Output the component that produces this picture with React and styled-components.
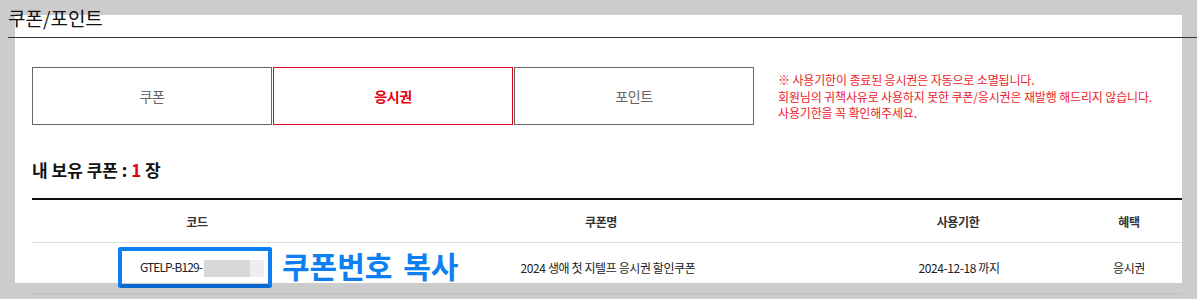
import React from "react";
import styled, { createGlobalStyle } from "styled-components";

const GlobalStyle = createGlobalStyle`
  * { box-sizing: border-box; }
  html, body { margin: 0; padding: 0; }
  body {
    font-family: "Noto Sans CJK KR", "Noto Sans", sans-serif;
    color: #222;
    background: #cccccc;
  }
`;

const Page = styled.div`
  position: relative;
  width: 1197px;
  height: 299px;
  overflow: hidden;
  background: #cccccc;
  padding: 15px 15px 0;
`;

const TitleBar = styled.h1`
  position: absolute;
  top: 5px;
  left: 8px;
  right: 0;
  margin: 0;
  padding-bottom: 6px;
  font-size: 19px;
  font-weight: 400;
  line-height: 26px;
  letter-spacing: 0;
  color: #111;
  border-bottom: 1px solid #333;
`;

const Panel = styled.div`
  height: 268px;
  background: #fff;
  overflow: hidden;
  padding: 52px 0 0 17px;
`;

const TopRow = styled.div`
  display: flex;
  align-items: flex-start;
`;

const Tabs = styled.div`
  display: flex;
  gap: 1px;
`;

const Tab = styled.div`
  width: 240px;
  height: 58px;
  display: flex;
  align-items: center;
  justify-content: center;
  font-size: 14px;
  letter-spacing: -0.3px;
  border: 1px solid ${p => (p.$active ? "#e60012" : "#666")};
  color: ${p => (p.$active ? "#e60012" : "#666")};
  font-weight: ${p => (p.$active ? 700 : 400)};
`;

const Notice = styled.div`
  margin-left: 24px;
  padding-top: 5px;
  font-size: 12px;
  line-height: 16.5px;
  letter-spacing: -0.15px;
  color: #ec1c2a;
`;

const Count = styled.div`
  margin-top: 35px;
  font-size: 17px;
  line-height: 20px;
  font-weight: 700;
  color: #111;
  & > em {
    font-style: normal;
    color: #e60012;
  }
`;

const Table = styled.div`
  margin-top: 18px;
  border-top: 2px solid #111;
`;

const Row = styled.div`
  display: grid;
  grid-template-columns: 330px 478px 236px 106px;
  height: ${p => (p.$head ? "43px" : "50px")};
  border-bottom: 1px solid #dcdcdc;
  align-items: center;
  font-size: 12px;
  letter-spacing: -0.4px;
  color: ${p => (p.$head ? "#333" : "#222")};
  font-weight: ${p => (p.$head ? 700 : 400)};
`;

const Cell = styled.div`
  text-align: center;
  white-space: nowrap;
  padding-left: ${p => p.$shift || 0}px;
`;

const Code = styled.span`
  letter-spacing: -0.9px;
  padding-left: 10px;
`;

const Masked = styled.span`
  display: inline-block;
  width: 60px;
  height: 17px;
  vertical-align: middle;
  margin-left: 2px;
  background: linear-gradient(to right, #d8d8d8 0 46px, #eeeef2 46px 60px);
`;

const BottomRule = styled.div`
  margin: 10px 0 0 17px;
  height: 1px;
  background: #bfbfbf;
`;

const CopyBox = styled.div`
  position: absolute;
  left: 118px;
  top: 247px;
  width: 154px;
  height: 41px;
  border: 4px solid #0b7ff2;
  border-bottom-color: #0768d0;
  border-radius: 3px;
`;

const CopyLabel = styled.div`
  position: absolute;
  left: 282px;
  top: 247px;
  font-size: 30px;
  line-height: 36px;
  font-weight: 700;
  letter-spacing: 0;
  word-spacing: 4px;
  color: #0d7ff0;
  white-space: nowrap;
`;

export default function App() {
  return (
    <>
      <GlobalStyle />
      <Page>
        <Panel>
          <TopRow>
            <Tabs>
              <Tab>쿠폰</Tab>
              <Tab $active>응시권</Tab>
              <Tab>포인트</Tab>
            </Tabs>
            <Notice>
              ※ 사용기한이 종료된 응시권은 자동으로 소멸됩니다.
              <br />
              회원님의 귀책사유로 사용하지 못한 쿠폰/응시권은 재발행 해드리지 않습니다.
              <br />
              사용기한을 꼭 확인해주세요.
            </Notice>
          </TopRow>
          <Count>
            내 보유 쿠폰 : <em>1</em> 장
          </Count>
          <Table>
            <Row $head>
              <Cell>코드</Cell>
              <Cell>쿠폰명</Cell>
              <Cell>사용기한</Cell>
              <Cell>혜택</Cell>
            </Row>
            <Row>
              <Cell>
                <Code>GTELP-B129-</Code>
                <Masked />
              </Cell>
              <Cell $shift={14}>2024 생애 첫 지텔프 응시권 할인쿠폰</Cell>
              <Cell $shift={2}>2024-12-18 까지</Cell>
              <Cell>응시권</Cell>
            </Row>
          </Table>
        </Panel>
        <BottomRule />
        <TitleBar>쿠폰/포인트</TitleBar>
        <CopyBox />
        <CopyLabel>쿠폰번호 복사</CopyLabel>
      </Page>
    </>
  );
}
